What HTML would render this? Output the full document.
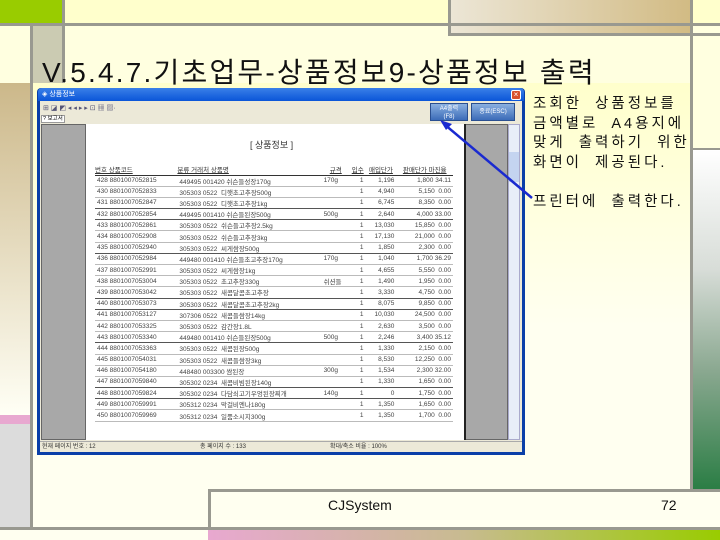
<!DOCTYPE html>
<html><head><meta charset="utf-8"><style>
*{margin:0;padding:0;box-sizing:border-box}
body{width:720px;height:540px;position:relative;overflow:hidden;background:#ffffe0;font-family:"Liberation Sans","Noto Sans CJK KR",sans-serif}
.a{position:absolute}
.tb td{font-size:6.5px;color:#444;height:11.2px;white-space:nowrap;padding:0 2px;border-bottom:1px solid #bbb}
.tb tr.d td{border-bottom:1.5px solid #555}
.tb th{font-size:6.5px;color:#333;font-weight:normal;border-bottom:1px solid #333;text-decoration:underline;height:11px}
.r{text-align:right}
</style></head><body>
<div class="a" style="left:0;top:0;width:720px;height:24px;background:#ffffcc"></div>
<div class="a" style="left:0;top:0;width:62px;height:23px;background:#99cc00"></div>
<div class="a" style="left:450px;top:0;width:240px;height:33px;background:linear-gradient(90deg,#ece6d6,#d2bb84)"></div>
<div class="a" style="left:0;top:23px;width:720px;height:3px;background:#999990"></div>
<div class="a" style="left:450px;top:33px;width:270px;height:3px;background:#999990"></div>
<div class="a" style="left:448px;top:0;width:3px;height:36px;background:#999990"></div>
<div class="a" style="left:31px;top:26px;width:31px;height:57px;background:#cbcbb2"></div>
<div class="a" style="left:62px;top:0;width:3px;height:85px;background:#999990"></div>
<div class="a" style="left:0;top:83px;width:30px;height:332px;background:linear-gradient(180deg,#ccb88a,#fffff5)"></div>
<div class="a" style="left:0;top:415px;width:30px;height:9px;background:#e8a8d0"></div>
<div class="a" style="left:0;top:424px;width:30px;height:104px;background:#dcdcdc"></div>
<div class="a" style="left:30px;top:26px;width:3px;height:514px;background:#999990"></div>
<div class="a" style="left:33px;top:83px;width:657px;height:407px;background:linear-gradient(180deg,#ffffcc,#fffff0 60%)"></div>
<div class="a" style="left:690px;top:0;width:3px;height:540px;background:#999990"></div>
<div class="a" style="left:693px;top:150px;width:27px;height:340px;background:linear-gradient(180deg,#ffffff,#d8ddd8 35%,#8aa890 65%,#2a7d44)"></div>
<div class="a" style="left:693px;top:148px;width:27px;height:2px;background:#999990"></div>
<div class="a" style="left:33px;top:490px;width:687px;height:37px;background:#fffff0"></div>
<div class="a" style="left:208px;top:489px;width:512px;height:3px;background:#999990"></div>
<div class="a" style="left:208px;top:489px;width:3px;height:40px;background:#999990"></div>
<div class="a" style="left:0;top:527px;width:720px;height:3px;background:#999990"></div>
<div class="a" style="left:0;top:530px;width:720px;height:10px;background:#fffff0"></div>
<div class="a" style="left:208px;top:530px;width:512px;height:10px;background:linear-gradient(90deg,#e8a8d0,#c8bb90 50%,#99cc00)"></div>
<div class="a" style="left:328px;top:497px;font-size:14px;color:#111">CJSystem</div>
<div class="a" style="left:661px;top:497px;font-size:14px;color:#111">72</div>
<div class="a" style="left:42px;top:51px;font-size:28px;color:#111;letter-spacing:2.2px;white-space:nowrap">V.5.4.7.기초업무-상품정보9-상품정보 출력</div>
<div class="a" style="left:533px;top:95px;font-size:14.5px;line-height:19.5px;color:#111;letter-spacing:3px;word-spacing:6px;white-space:nowrap">조회한 상품정보를<br>금액별로 A4용지에<br>맞게 출력하기 위한<br>화면이 제공된다.<br><br>프린터에 출력한다.</div>
<div class="a" style="left:37px;top:88px;width:488px;height:367px;background:#0a3fa8;border-radius:4px 4px 0 0"></div>
<div class="a" style="left:38px;top:88px;width:486px;height:13px;background:linear-gradient(180deg,#3a80e8,#0a55d8);border-radius:4px 4px 0 0"></div>
<div class="a" style="left:42px;top:89px;font-size:7px;color:#fff">◈ 상품정보</div>
<div class="a" style="left:511px;top:90px;width:10px;height:10px;background:#d8502c;border:1px solid #fff;border-radius:2px;color:#fff;font-size:8px;line-height:8px;text-align:center">×</div>
<div class="a" style="left:40px;top:101px;width:482px;height:351px;background:#ece9d8"></div>
<div class="a" style="left:43px;top:103px;font-size:7px;color:#557">⊞ ◪ ◩ ◂ ◂ ▸ ▸ ⊡ ▦ ▨·</div>
<div class="a" style="left:430px;top:103px;width:38px;height:18px;background:linear-gradient(180deg,#8ab0e0,#3c6cb8);color:#fff;font-size:6px;text-align:center;line-height:8px;padding-top:1px;border:1px solid #2a4f90">A4출력<br>(F8)</div>
<div class="a" style="left:471px;top:103px;width:44px;height:18px;background:linear-gradient(180deg,#8ab0e0,#3c6cb8);color:#fff;font-size:6px;text-align:center;line-height:16px;border:1px solid #2a4f90">종료(ESC)</div>
<div class="a" style="left:41px;top:115px;width:24px;height:8px;background:#fff;border:1px solid #999;font-size:5.5px;line-height:6px;padding-left:1px;white-space:nowrap">? 보고서</div>
<div class="a" style="left:41px;top:124px;width:467px;height:316px;background:#a8a8a8;border:1px solid #666"></div>
<div class="a" style="left:508px;top:124px;width:12px;height:316px;background:#e8eef8;border:1px solid #aac"></div>
<div class="a" style="left:509px;top:152px;width:10px;height:30px;background:#c4d4f0"></div>
<div class="a" style="left:85px;top:124px;width:381px;height:316px;background:#fff;border-left:1px solid #666;border-right:2px solid #222"></div>
<div class="a" style="left:250px;top:138px;font-size:9px;color:#333">[ 상품정보 ]</div>
<table class="tb a" style="left:95px;top:164px;width:358px;border-collapse:collapse">
<tr><th style="text-align:left">번호 상품코드</th><th style="text-align:left">분류 거래처 상품명</th><th>규격</th><th>입수</th><th>매입단가</th><th>판매단가 마진율</th></tr>
<tr><td>428 8801007052815</td><td>449495 001420 쉬슨들성장170g</td><td>170g</td><td class="r">1</td><td class="r">1,196</td><td class="r">1,800 34.11</td></tr>
<tr><td>430 8801007052833</td><td>305303 0522 &nbsp;디햇초고추장500g</td><td></td><td class="r">1</td><td class="r">4,940</td><td class="r">5,150 &nbsp;0.00</td></tr>
<tr class="d"><td>431 8801007052847</td><td>305303 0522 &nbsp;디햇초고추장1kg</td><td></td><td class="r">1</td><td class="r">6,745</td><td class="r">8,350 &nbsp;0.00</td></tr>
<tr class="d"><td>432 8801007052854</td><td>449495 001410 쉬슨들된장500g</td><td>500g</td><td class="r">1</td><td class="r">2,640</td><td class="r">4,000 33.00</td></tr>
<tr><td>433 8801007052861</td><td>305303 0522 &nbsp;쉬슨들고추장2.5kg</td><td></td><td class="r">1</td><td class="r">13,030</td><td class="r">15,850 &nbsp;0.00</td></tr>
<tr><td>434 8801007052908</td><td>305303 0522 &nbsp;쉬슨들고추장3kg</td><td></td><td class="r">1</td><td class="r">17,130</td><td class="r">21,000 &nbsp;0.00</td></tr>
<tr class="d"><td>435 8801007052940</td><td>305303 0522 &nbsp;씨게쌈장500g</td><td></td><td class="r">1</td><td class="r">1,850</td><td class="r">2,300 &nbsp;0.00</td></tr>
<tr><td>436 8801007052984</td><td>449480 001410 쉬슨들초고추장170g</td><td>170g</td><td class="r">1</td><td class="r">1,040</td><td class="r">1,700 36.29</td></tr>
<tr><td>437 8801007052991</td><td>305303 0522 &nbsp;씨게쌈장1kg</td><td></td><td class="r">1</td><td class="r">4,655</td><td class="r">5,550 &nbsp;0.00</td></tr>
<tr><td>438 8801007053004</td><td>305303 0522 &nbsp;초고추장330g</td><td>쉬션들</td><td class="r">1</td><td class="r">1,490</td><td class="r">1,950 &nbsp;0.00</td></tr>
<tr class="d"><td>439 8801007053042</td><td>305303 0522 &nbsp;새콤달콤초고추장</td><td></td><td class="r">1</td><td class="r">3,330</td><td class="r">4,750 &nbsp;0.00</td></tr>
<tr class="d"><td>440 8801007053073</td><td>305303 0522 &nbsp;새콤달콤초고추장2kg</td><td></td><td class="r">1</td><td class="r">8,075</td><td class="r">9,850 &nbsp;0.00</td></tr>
<tr><td>441 8801007053127</td><td>307306 0522 &nbsp;새콤들쌈장14kg</td><td></td><td class="r">1</td><td class="r">10,030</td><td class="r">24,500 &nbsp;0.00</td></tr>
<tr><td>442 8801007053325</td><td>305303 0522 &nbsp;감간장1.8L</td><td></td><td class="r">1</td><td class="r">2,630</td><td class="r">3,500 &nbsp;0.00</td></tr>
<tr class="d"><td>443 8801007053340</td><td>449480 001410 쉬슨들된장500g</td><td>500g</td><td class="r">1</td><td class="r">2,246</td><td class="r">3,400 35.12</td></tr>
<tr><td>444 8801007053363</td><td>305303 0522 &nbsp;새콤된장500g</td><td></td><td class="r">1</td><td class="r">1,330</td><td class="r">2,150 &nbsp;0.00</td></tr>
<tr><td>445 8801007054031</td><td>305303 0522 &nbsp;새콤들쌈장3kg</td><td></td><td class="r">1</td><td class="r">8,530</td><td class="r">12,250 &nbsp;0.00</td></tr>
<tr><td>446 8801007054180</td><td>448480 003300 쌈된장</td><td>300g</td><td class="r">1</td><td class="r">1,534</td><td class="r">2,300 32.00</td></tr>
<tr class="d"><td>447 8801007059840</td><td>305302 0234 &nbsp;새콤비빔된장140g</td><td></td><td class="r">1</td><td class="r">1,330</td><td class="r">1,650 &nbsp;0.00</td></tr>
<tr class="d"><td>448 8801007059824</td><td>305302 0234 &nbsp;다담쇠고기우엉된장찌개</td><td>140g</td><td class="r">1</td><td class="r">0</td><td class="r">1,750 &nbsp;0.00</td></tr>
<tr><td>449 8801007059991</td><td>305312 0234 &nbsp;막걸비엔나180g</td><td></td><td class="r">1</td><td class="r">1,350</td><td class="r">1,650 &nbsp;0.00</td></tr>
<tr><td>450 8801007059969</td><td>305312 0234 &nbsp;일품소시지300g</td><td></td><td class="r">1</td><td class="r">1,350</td><td class="r">1,700 &nbsp;0.00</td></tr>
</table>
<div class="a" style="left:40px;top:441px;width:482px;height:11px;background:#ece9d8;border-top:1px solid #aaa;font-size:6px;line-height:10px;color:#333">
<span class="a" style="left:2px">현재 페이지 번호 : 12</span><span class="a" style="left:160px">총 페이지 수 : 133</span><span class="a" style="left:290px">확대/축소 비율 : 100%</span></div>
<svg class="a" style="left:0;top:0" width="720" height="540"><line x1="532" y1="198" x2="444" y2="124" stroke="#1a2ad0" stroke-width="2.5"/><polygon points="440,120 452,124 446,130" fill="#1a2ad0"/></svg>
</body></html>
